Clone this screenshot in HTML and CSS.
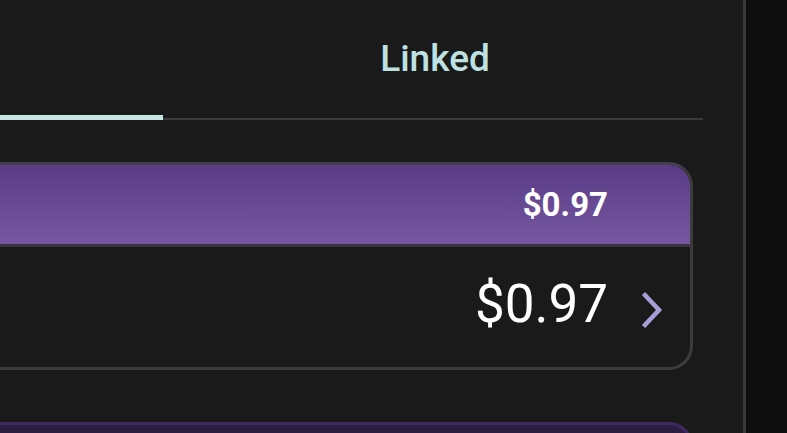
FILE: index.html
```html
<!DOCTYPE html>
<html lang="en">
<head>
<meta charset="utf-8">
<title>Linked</title>
<link rel="stylesheet" href="styles.css">
</head>
<body>
<div class="screen">
  <main class="panel">
    <nav class="tabs">
      <div class="tab tab-active"></div>
      <div class="tab tab-label">Linked</div>
    </nav>
    <section class="card">
      <header class="card-head"><span class="head-amount">$0.97</span></header>
      <div class="card-body">
        <span class="amount">$0.97</span>
        <svg class="chevron" width="22" height="38" viewBox="0 0 22 38" aria-hidden="true">
          <polyline points="2.5,2.5 18,19 2.5,35.5" fill="none" stroke="#a69ed6" stroke-width="4.6" stroke-linejoin="miter"/>
        </svg>
      </div>
    </section>
    <section class="card card-alt"></section>
  </main>
  <aside class="rail"></aside>
</div>
</body>
</html>
```

FILE: styles.css
```css
html, body {
  margin: 0;
  padding: 0;
  background: #1a1a1a;
  overflow: hidden;
}

.screen {
  display: flex;
  width: 787px;
  height: 433px;
  font-family: Roboto, "Noto Sans", "Liberation Sans", sans-serif;
}

.panel {
  box-sizing: border-box;
  width: 746px;
  padding-right: 40px;
  border-right: 3px solid #393939;
  background: #1a1a1a;
  overflow: hidden;
}

.rail {
  flex: 1;
  background: #0e0e0e;
}

.tabs {
  display: flex;
  height: 120px;
}

.tab {
  box-shadow: inset 0 -2px 0 #3a3a3a;
}

.tab-active {
  width: 163px;
  box-shadow: inset 0 -5px 0 #c6e6e4;
}

.tab-label {
  flex: 1;
  box-sizing: border-box;
  padding-left: 4px;
  padding-top: 40px;
  text-align: center;
  font-size: 37px;
  font-weight: 500;
  line-height: 37px;
  color: #bde2e1;
}

.card {
  margin-top: 42px;
  margin-left: -40px;
  margin-right: 10px;
  border: 3px solid #3c3c3c;
  border-top-color: #443f4d;
  border-radius: 24px;
  overflow: hidden;
  background: #1a1a1a;
}

.card-head {
  height: 79px;
  display: flex;
  align-items: center;
  justify-content: flex-end;
  padding-right: 82px;
  background: linear-gradient(180deg, #5a3c86 0%, #7658a1 100%);
  border-bottom: 3px solid #3a3541;
}

.head-amount {
  font-size: 33px;
  font-weight: 700;
  line-height: 1;
  color: #ffffff;
}

.card-body {
  height: 120px;
  display: flex;
  align-items: center;
  justify-content: flex-end;
  gap: 33px;
  padding-right: 27px;
}

.amount {
  font-size: 53px;
  font-weight: 400;
  line-height: 1;
  color: #ffffff;
  margin-bottom: 6px;
}

.chevron {
  display: block;
  margin-top: 5px;
}

.card-alt {
  margin-top: 52px;
  height: 100px;
  border-color: #40295f;
  background: linear-gradient(180deg, #2c1e42 0%, #24192f 100%);
}
```
